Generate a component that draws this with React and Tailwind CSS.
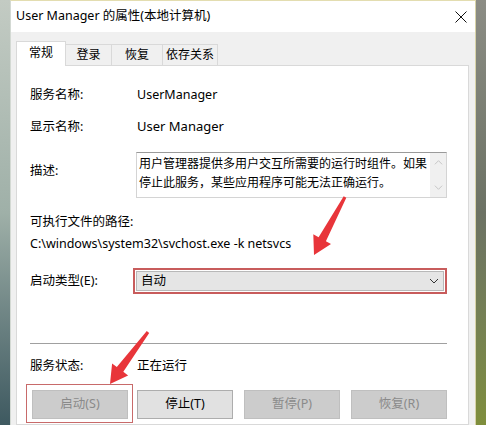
import React from "react";

const UI_FONT = { fontFamily: '"Noto Sans", "Noto Sans CJK SC", sans-serif' };

function Tab({ label, active }) {
  if (active) {
    return (
      <div className="relative z-10 -mb-px flex h-[25px] w-[50px] items-center justify-center border border-b-0 border-[#d9d9d9] bg-white pb-[2px] text-[12px] text-black">
        {label}
      </div>
    );
  }
  return (
    <div className="mt-[3px] flex h-[21px] items-center justify-center border border-b-0 border-l-0 border-[#d9d9d9] bg-[#f0f0f0] text-[12px] text-black">
      {label}
    </div>
  );
}

function Chevron({ dir = "down", color = "#333", size = 10 }) {
  const d = dir === "down" ? "M1 3 L5 7 L9 3" : "M1 7 L5 3 L9 7";
  return (
    <svg width={size} height={size} viewBox="0 0 10 10">
      <path d={d} fill="none" stroke={color} strokeWidth="1" />
    </svg>
  );
}

function Btn({ label, disabled }) {
  return (
    <div
      className={
        "flex h-[29px] w-[96px] items-center justify-center border text-[12.5px] " +
        (disabled
          ? "border-[#bfbfbf] bg-[#cccccc] text-[#8a8a8a]"
          : "border-[#adadad] bg-[#e1e1e1] text-black")
      }
    >
      {label}
    </div>
  );
}

export default function App() {
  return (
    <div className="relative flex h-[425px] w-[486px] overflow-hidden" style={UI_FONT}>
      {/* desktop behind the window, left edge */}
      <div className="w-[10px] shrink-0 bg-gradient-to-b from-[#c3cbc3] via-[#9fb0a8] to-[#3e5960]" />

      {/* dialog window */}
      <div className="flex w-[466px] shrink-0 flex-col border-x border-t border-l-[#d3d9d3] border-r-[#d8d3a8] border-t-[#e3ddb0] bg-[#f0f0f0]">
        {/* title bar */}
        <div className="flex h-[31px] shrink-0 items-center justify-between bg-white pl-[5px] pr-[8px]">
          <span className="text-[12.5px] text-black">User Manager 的属性(本地计算机)</span>
          <svg width="12" height="12" viewBox="0 0 12 12">
            <path d="M0.5 0.5 L11.5 11.5 M11.5 0.5 L0.5 11.5" stroke="#111" strokeWidth="1" />
          </svg>
        </div>

        {/* tabs + page */}
        <div className="flex flex-1 flex-col pl-[5px] pr-[6px] pt-[9px]">
          <div className="flex">
            <Tab label="常规" active />
            <div className="w-[46px]">
              <Tab label="登录" />
            </div>
            <div className="w-[51px]">
              <Tab label="恢复" />
            </div>
            <div className="w-[55px]">
              <Tab label="依存关系" />
            </div>
          </div>

          <div className="flex-1 border border-[#d9d9d9] bg-white pl-[13px] pr-[21px] pt-[19px] text-[12.5px] text-black">
            <div className="flex h-[20px] items-center">
              <span className="w-[107px]">服务名称:</span>
              <span className="text-[12.5px]">UserManager</span>
            </div>

            <div className="mt-[12px] flex h-[20px] items-center">
              <span className="w-[107px]">显示名称:</span>
              <span className="text-[13px]">User Manager</span>
            </div>

            <div className="mt-[15px] flex items-start">
              <span className="mt-[9px] h-[20px] w-[106px] leading-[20px]">描述:</span>
              <div className="flex h-[46px] flex-1 border border-[#d4d4d4] border-t-[#9a9a9a]">
                <div className="flex-1 pl-[2px] pt-[1px] text-[12px] leading-[19px]">
                  用户管理器提供多用户交互所需要的运行时组件。如果
                  <br />
                  停止此服务，某些应用程序可能无法正确运行。
                </div>
                <div className="flex w-[16px] flex-col items-center justify-between bg-[#f0f0f0] py-[5px]">
                  <Chevron dir="up" color="#c2c2c2" size={9} />
                  <Chevron dir="down" color="#c2c2c2" size={9} />
                </div>
              </div>
            </div>

            <div className="mt-[14px] h-[20px] leading-[20px]">可执行文件的路径:</div>
            <div className="mt-[2px] h-[20px] text-[12.5px] leading-[20px]">
              C:\windows\system32\svchost.exe -k netsvcs
            </div>

            <div className="mt-[14px] flex h-[26px] items-center">
              <span className="w-[103px]">启动类型(E):</span>
              <div className="flex h-[26px] flex-1 border-2 border-[#c85c5c] p-px">
                <div className="flex flex-1 items-center justify-between border border-[#b8b8b8] bg-[#e5e5e5] pl-[4px] pr-[4px]">
                  <span className="text-[12.5px]">自动</span>
                  <Chevron dir="down" color="#333" size={10} />
                </div>
              </div>
            </div>

            <div className="mt-[49px] h-px bg-[#a0a0a0]" />

            <div className="mt-[12px] flex h-[20px] items-center">
              <span className="w-[107px]">服务状态:</span>
              <span>正在运行</span>
            </div>

            <div className="mt-[14px] flex gap-[9px] pl-[2px]">
              <div className="relative">
                <Btn label="启动(S)" disabled />
                <div className="pointer-events-none absolute -bottom-[4px] -left-[6px] -right-[5px] -top-[6px] border-[1.5px] border-[#c86a6a]" />
              </div>
              <Btn label="停止(T)" />
              <div className="ml-[2px]">
                <Btn label="暂停(P)" disabled />
              </div>
              <div className="ml-[2px]">
                <Btn label="恢复(R)" disabled />
              </div>
            </div>
          </div>
        </div>
      </div>

      {/* desktop behind the window, right edge */}
      <div className="flex-1 bg-gradient-to-b from-[#8c8d85] via-[#6c7264] to-[#7f8e3c]" />

      {/* red pointer arrows drawn over the dialog */}
      <svg className="pointer-events-none absolute left-0 top-0" width="486" height="425" viewBox="0 0 486 425">
        <polygon
          points="346.3,197.7 325.9,241.2 331.0,244.0 314,255 313.3,234.3 318.6,237.2 343.7,196.3"
          fill="#e8353a"
        />
        <polygon
          points="149.2,332.9 123.3,371.8 128.1,375.4 110,384 112.1,363.4 116.8,366.9 146.8,331.1"
          fill="#e8353a"
        />
      </svg>
    </div>
  );
}
